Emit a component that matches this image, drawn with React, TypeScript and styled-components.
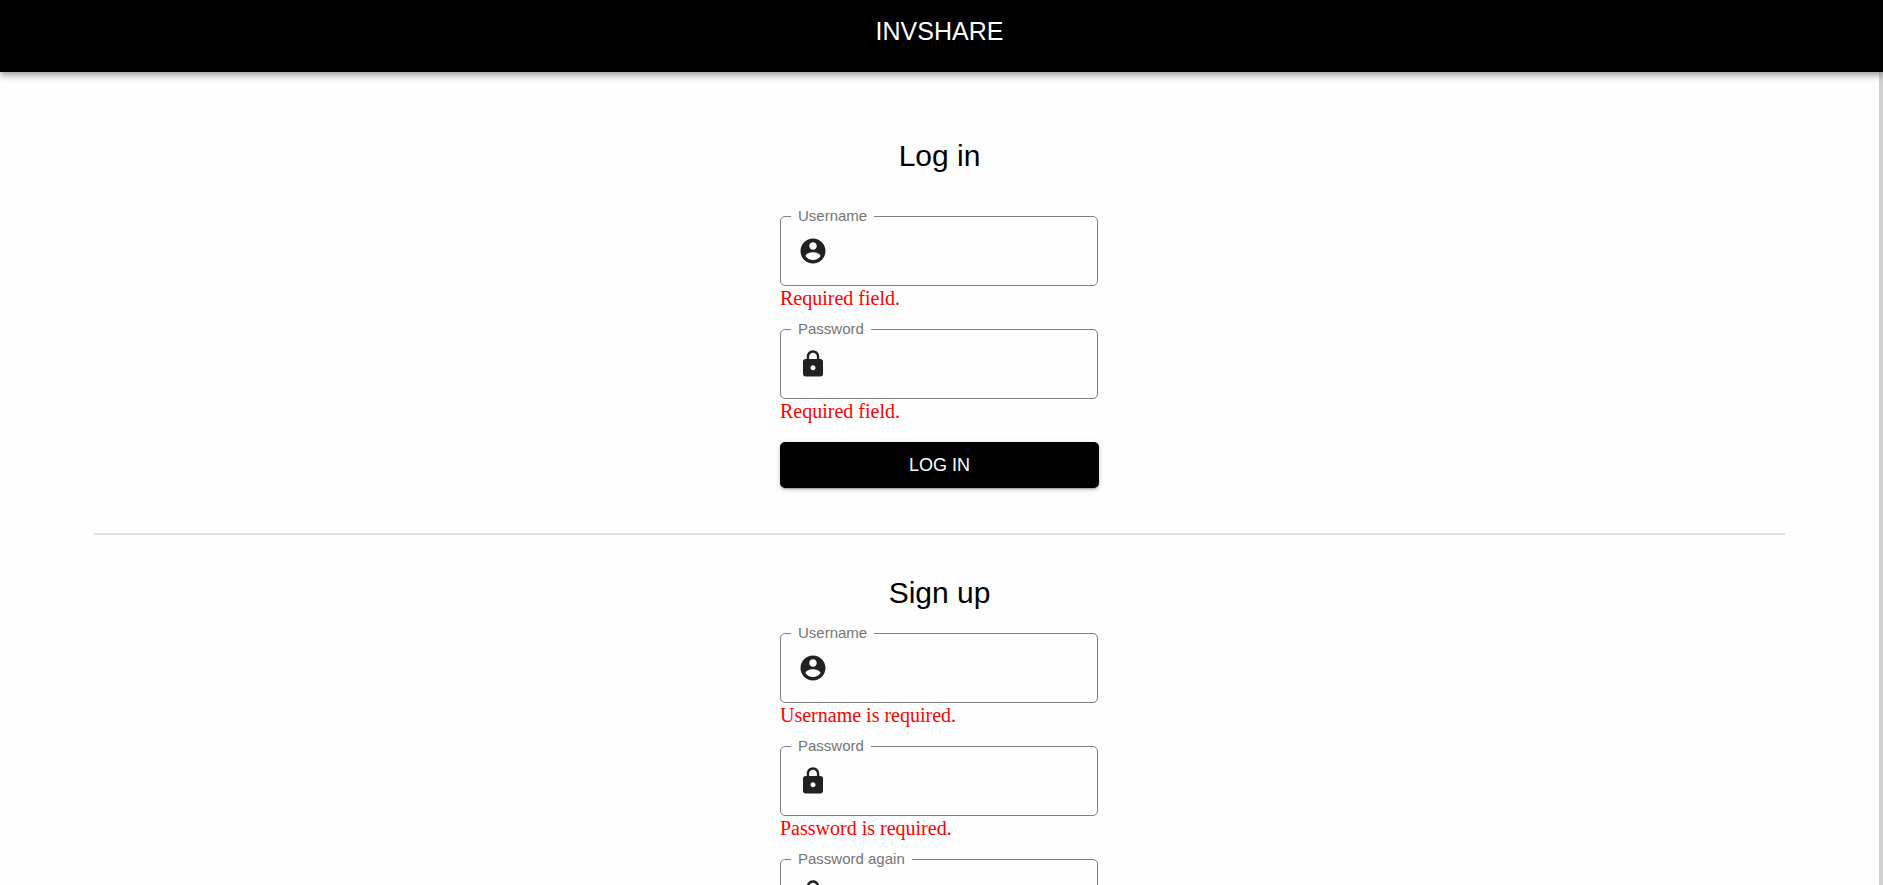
import React, { useId } from "react";
import styled, { createGlobalStyle } from "styled-components";

const sans = `"Liberation Sans", Arial, Helvetica, sans-serif`;
const serif = `"Liberation Serif", "Times New Roman", Times, serif`;

const GlobalStyle = createGlobalStyle`
  *, *::before, *::after { box-sizing: border-box; }
  body { margin: 0; background: #fefefe; font-family: ${serif}; }
`;

const Page = styled.div`
  display: flex;
  flex-direction: column;
  height: 100vh;
`;

const Header = styled.header`
  position: relative;
  z-index: 1;
  flex: none;
  padding: 11px 4px 21px 0;
  background: #000;
  color: #fff;
  text-align: center;
  box-shadow: 0 3px 5px -1px rgba(0, 0, 0, 0.2), 0 5px 6px 0 rgba(0, 0, 0, 0.14),
    0 1px 12px 0 rgba(0, 0, 0, 0.12);
`;

const Brand = styled.h1`
  margin: 0;
  font: 400 25px/40px ${sans};
`;

const Main = styled.main`
  flex: 1;
  min-height: 0;
  overflow-y: auto;
  scrollbar-width: none;
  border-right: 4px solid #d0d0d0;
  padding: 64px 5% 20px;
`;

const Form = styled.form<{ $gap: number }>`
  display: flex;
  flex-direction: column;
  gap: ${(p) => p.$gap}px;
  width: 100%;
  max-width: 319px;
  margin: 0 auto;
`;

const Title = styled.h2`
  margin: 0;
  color: #000;
  font: 400 30px/40px ${sans};
  text-align: center;
`;

const Fields = styled.div`
  display: flex;
  flex-direction: column;
  gap: 18px;
`;

const Box = styled.div`
  position: relative;
  display: flex;
  align-items: center;
  gap: 10px;
  height: 70px;
  margin-right: 1px;
  padding: 0 17px;
  border: 1px solid #808080;
  border-radius: 5px;

  &:focus-within { border-color: #000; }
`;

const Label = styled.label`
  position: absolute;
  top: -10px;
  left: 10px;
  padding: 0 7px;
  background: #fefefe;
  color: #757575;
  font: 400 15px/18px ${sans};
`;

const Input = styled.input`
  flex: 1;
  min-width: 0;
  height: 24px;
  padding: 0;
  border: 0;
  outline: 0;
  background: transparent;
  color: #212121;
  font: 400 20px/24px ${sans};
`;

const Icon = styled.svg`
  flex: none;
  width: 30px;
  height: 30px;
  fill: #212121;
`;

const ErrorText = styled.p`
  margin: 0;
  color: #f00;
  font: 400 20px/25px ${serif};
`;

const Submit = styled.button`
  height: 46px;
  border: 0;
  border-radius: 5px;
  background: #000;
  color: #fff;
  font: 400 18px/30px ${sans};
  text-transform: uppercase;
  cursor: pointer;
  box-shadow: 0 4px 1px -3px rgba(0, 0, 0, 0.2), 0 2px 3px 0 rgba(0, 0, 0, 0.14),
    0 1px 6px 0 rgba(0, 0, 0, 0.12);
`;

const Divider = styled.hr`
  height: 2px;
  margin: 45px 0 38px;
  border: 0;
  background: #e0e0e0;
`;

const icons = {
  account:
    "M12 2C6.48 2 2 6.48 2 12s4.48 10 10 10 10-4.48 10-10S17.52 2 12 2zm0 3c1.66 0 3 1.34 3 3s-1.34 3-3 3-3-1.34-3-3 1.34-3 3-3zm0 14.2c-2.5 0-4.71-1.28-6-3.22.03-1.99 4-3.08 6-3.08 1.99 0 5.97 1.09 6 3.08-1.29 1.94-3.5 3.22-6 3.22z",
  lock:
    "M18 8h-1V6c0-2.76-2.24-5-5-5S7 3.24 7 6v2H6c-1.1 0-2 .9-2 2v10c0 1.1.9 2 2 2h12c1.1 0 2-.9 2-2V10c0-1.1-.9-2-2-2zm-6 9c-1.1 0-2-.9-2-2s.9-2 2-2 2 .9 2 2-.9 2-2 2zm3.1-9H8.9V6c0-1.71 1.39-3.1 3.1-3.1 1.71 0 3.1 1.39 3.1 3.1v2z",
};

type FieldProps = {
  label: string;
  icon: keyof typeof icons;
  error?: string;
};

function Field({ label, icon, error }: FieldProps) {
  const id = useId();
  return (
    <div>
      <Box>
        <Label htmlFor={id}>{label}</Label>
        <Icon viewBox="0 0 24 24" aria-hidden="true">
          <path d={icons[icon]} />
        </Icon>
        <Input id={id} type={icon === "lock" ? "password" : "text"} />
      </Box>
      {error && <ErrorText>{error}</ErrorText>}
    </div>
  );
}

export default function App() {
  const stay = (e: React.FormEvent) => e.preventDefault();
  return (
    <Page>
      <GlobalStyle />
      <Header>
        <Brand>INVSHARE</Brand>
      </Header>
      <Main>
        <Form $gap={40} onSubmit={stay}>
          <Title>Log in</Title>
          <Fields>
            <Field label="Username" icon="account" error="Required field." />
            <Field label="Password" icon="lock" error="Required field." />
            <Submit type="submit">Log in</Submit>
          </Fields>
        </Form>
        <Divider />
        <Form $gap={20} onSubmit={stay}>
          <Title>Sign up</Title>
          <Fields>
            <Field label="Username" icon="account" error="Username is required." />
            <Field label="Password" icon="lock" error="Password is required." />
            <Field label="Password again" icon="lock" />
          </Fields>
        </Form>
      </Main>
    </Page>
  );
}
